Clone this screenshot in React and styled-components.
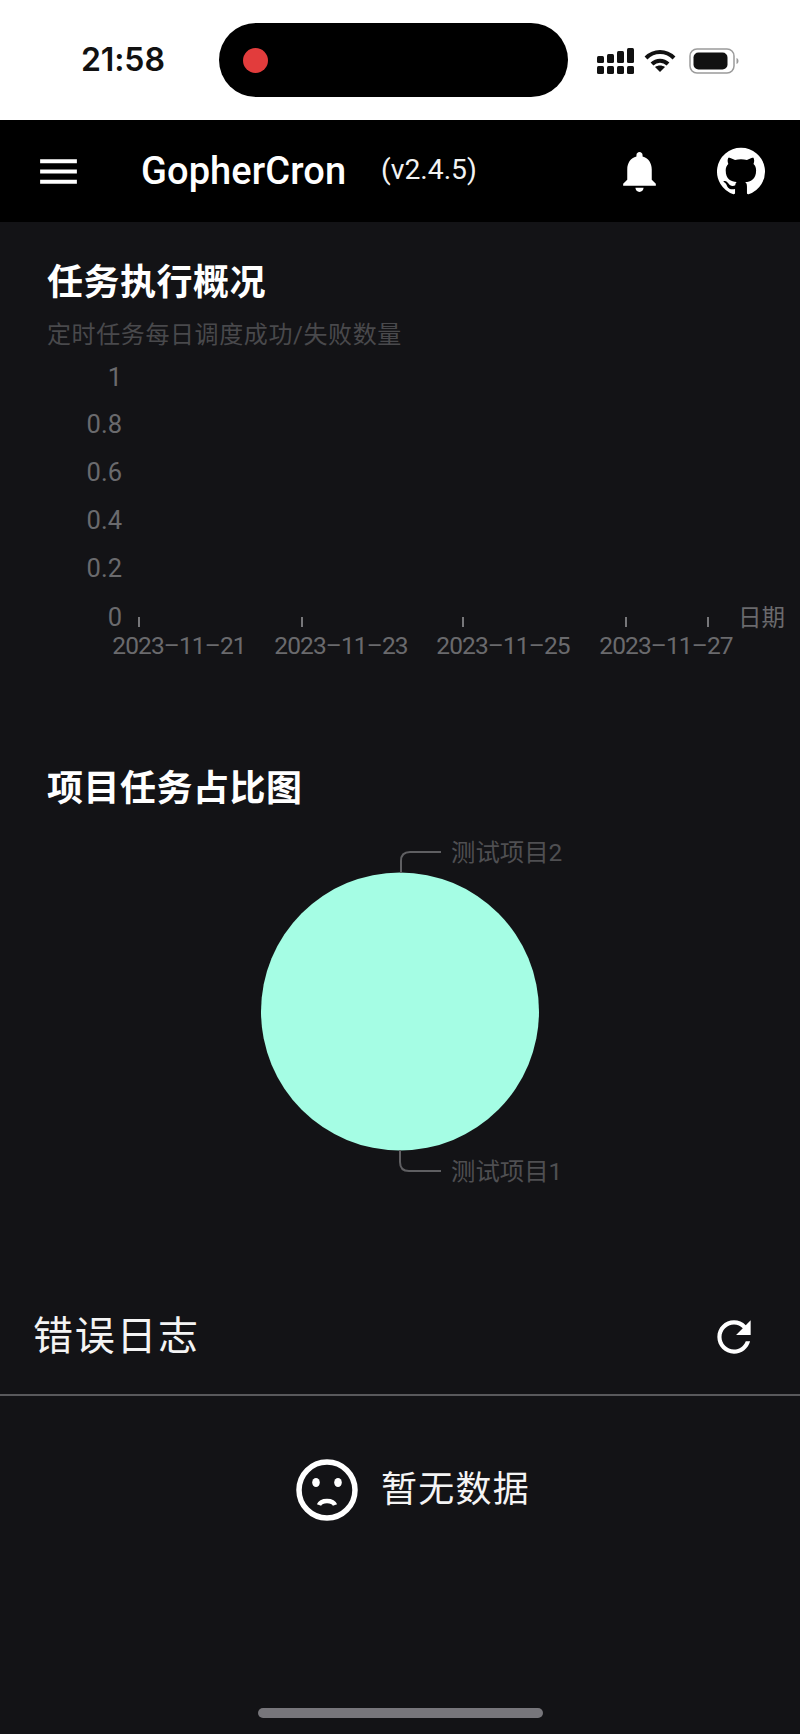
import React from "react";
import styled, { createGlobalStyle } from "styled-components";

const Global = createGlobalStyle`
  html, body { margin: 0; padding: 0; background: #131316; }
  * { box-sizing: border-box; }
`;
const CJK = `Roboto, "Noto Sans CJK SC", sans-serif`;

const Page = styled.div`
  width: 800px; height: 1734px; display: flex; flex-direction: column;
  background: #131316; color: #fff; font-family: ${CJK}; overflow: hidden;
`;
const StatusBar = styled.div`
  height: 120px; flex: none; background: #fff; color: #111; position: relative;
  display: flex; align-items: center; padding: 0 61px 0 81px;
`;
const Clock = styled.div`
  width: 138px; font: 600 32px/1 Inter, sans-serif; letter-spacing: -0.1px; margin-top: -1px;
`;
const Island = styled.div`
  width: 350px; height: 74px; border-radius: 37px; background: #000; display: flex; align-items: center; padding-left: 24px;
`;
const RecDot = styled.span`
  width: 25px; height: 25px; border-radius: 50%; background: #e23c3c;
`;
const StatusIcons = styled.div`
  display: flex; align-items: center; gap: 9px; margin-left: 29px; margin-top: 1px;
`;
const AppBar = styled.header`
  height: 102px; flex: none; background: #000; display: flex; align-items: center; padding: 0 32px 0 34px;
`;
const IconSlot = styled.span`
  display: inline-flex; flex: none; color: #fff;
  margin: ${p => p.$m || 0};
`;
const Brand = styled.div`
  font: 500 38px/1 Roboto, sans-serif; margin-left: 58px; width: 240px; letter-spacing: 0.1px;
`;
const Version = styled.div`
  font: 400 28.3px/1 Roboto, sans-serif; flex: 1; color: #f2f2f2; margin-top: -2px;
`;
const Main = styled.main`
  flex: 1; display: flex; flex-direction: column; min-height: 0;
`;
const Section = styled.section`
  padding: ${p => p.$pad};
`;
const SectionTitle = styled.h2`
  margin: 0; font: 700 36px/44px ${CJK}; color: #fff; letter-spacing: 0.5px;
`;
const SectionSub = styled.p`
  margin: 14px 0 0; font: 400 24px/32px ${CJK}; color: #49494c; letter-spacing: 0.6px;
`;
const Chart = styled.svg`
  display: block; flex: none; font-family: ${CJK};
`;
const LogHead = styled.div`
  height: 117px; margin-top: 78px; display: flex; align-items: center; justify-content: space-between;
  padding: 0 41px 0 33px; border-bottom: 2px solid #59595c;
`;
const LogTitle = styled.div`
  font: 400 40px/1 ${CJK}; letter-spacing: 1.7px; color: #f4f4f4;
`;
const Empty = styled.div`
  display: flex; align-items: center; justify-content: center; gap: 23px; padding: 63px 0 0 26px;
`;
const EmptyText = styled.div`
  font: 400 36px/1 ${CJK}; color: #f4f4f4; letter-spacing: 1.2px;
`;
const HomeWrap = styled.div`
  margin-top: auto; padding-bottom: 16px; display: flex; justify-content: center;
`;
const HomeBar = styled.div`
  width: 285px; height: 10px; border-radius: 5px; background: #77767b;
`;

const Mi = ({ d, size, color = "currentColor" }) => (
  <svg width={size} height={size} viewBox="0 0 24 24" fill={color}><path d={d} /></svg>
);
const ICONS = {
  menu: "M3 18h18v-2H3v2zm0-5h18v-2H3v2zm0-7v2h18V6H3z",
  bell: "M12 22c1.1 0 2-.9 2-2h-4c0 1.1.89 2 2 2zm6-6v-5c0-3.07-1.64-5.64-4.5-6.32V4c0-.83-.67-1.5-1.5-1.5s-1.5.67-1.5 1.5v.68C7.63 5.36 6 7.92 6 11v5l-2 2v1h16v-1l-2-2z",
  github: "M12 1.27a11 11 0 00-3.48 21.46c.55.09.73-.28.73-.55v-1.84c-3.03.64-3.67-1.46-3.67-1.46-.55-1.29-1.28-1.65-1.28-1.65-.92-.65.1-.65.1-.65 1.1 0 1.73 1.1 1.73 1.1.92 1.65 2.57 1.2 3.21.92a2 2 0 01.64-1.47c-2.47-.27-5.04-1.19-5.04-5.5 0-1.1.46-2.1 1.2-2.84a3.76 3.76 0 010-2.93s.91-.28 3.11 1.1c1.8-.49 3.7-.49 5.5 0 2.1-1.38 3.02-1.1 3.02-1.1a3.76 3.76 0 010 2.93c.83.74 1.2 1.74 1.2 2.94 0 4.21-2.57 5.13-5.04 5.4.45.37.82.92.82 2.02v3.03c0 .27.1.64.73.55A11 11 0 0012 1.27",
  refresh: "M17.65 6.35C16.2 4.9 14.21 4 12 4c-4.42 0-7.99 3.58-7.99 8s3.57 8 7.99 8c3.73 0 6.84-2.55 7.73-6h-2.08c-.82 2.33-3.04 4-5.65 4-3.31 0-6-2.69-6-6s2.69-6 6-6c1.66 0 3.14.69 4.22 1.78L13 11h7V4l-2.35 2.35z",
};

const Signal = () => (
  <svg width="38" height="26" viewBox="0 0 38 26" fill="#111">
    {[0, 10, 20, 30].map((x, i) => (
      <g key={x}>
        <rect x={x} y="18" width="7" height="8" rx="1.5" />
        <rect x={x} y={[8, 6, 3, 0][i]} width="7" height={[7, 9, 12, 15][i]} rx="1.5" />
      </g>
    ))}
  </svg>
);
const Wifi = () => (
  <svg width="32" height="24" viewBox="0 0 32 24" fill="none" stroke="#111" strokeWidth="4">
    <path d="M2 9c8-8 20-8 28 0" />
    <path d="M8 15c4.500-4.500 11.500-4.500 16 0" />
    <path d="M16 23l-5-5c3-2 7-2 10 0z" fill="#111" stroke="none" />
  </svg>
);
const Battery = () => (
  <svg width="50" height="26" viewBox="0 0 50 26">
    <rect x="1" y="1" width="44" height="24" rx="7" fill="none" stroke="#9b9b9b" strokeWidth="1.500" />
    <rect x="4.500" y="4.500" width="34" height="17" rx="5" fill="#111" />
    <path d="M47.500 10c1.500.5 2 2 2 3s-.5 2.500-2 3z" fill="#9b9b9b" />
  </svg>
);
const Sad = () => (
  <svg width="62" height="62" viewBox="0 0 62 62" fill="none">
    <circle cx="31" cy="31" r="28" stroke="#fff" strokeWidth="5.500" />
    <ellipse cx="20" cy="23.500" rx="3.800" ry="4.500" fill="#fff" />
    <ellipse cx="42" cy="23.500" rx="3.800" ry="4.500" fill="#fff" />
    <path d="M23 46c2-5.500 14-5.500 16 0" stroke="#fff" strokeWidth="4.500" />
  </svg>
);

const yLabels = [["1", 17], ["0.8", 64], ["0.6", 112], ["0.4", 160], ["0.2", 208], ["0", 257]];
const ticks = [139, 302, 463, 626, 708];
const xLabels = [[179, "2023–11–21"], [341, "2023–11–23"], [503, "2023–11–25"], [666, "2023–11–27"]];

const LineChart = () => (
  <Chart width="800" height="320" viewBox="0 0 800 320">
    <g fill="#6a6a6d" fontSize="25.500" textAnchor="end">
      {yLabels.map(([t, y]) => <text key={t} x="122" y={y + 9}>{t}</text>)}
    </g>
    <g stroke="#77777a" strokeWidth="2">
      {ticks.map(x => <line key={x} x1={x} x2={x} y1="257" y2="267" />)}
    </g>
    <g fill="#6a6a6d" fontSize="24.500" letterSpacing="-0.9" textAnchor="middle">
      {xLabels.map(([x, t]) => <text key={t} x={x} y="294">{t}</text>)}
    </g>
    <text x="738" y="266" fill="#6a6a6d" fontSize="23.500">日期</text>
  </Chart>
);

const PieChart = () => (
  <Chart width="800" height="380" viewBox="0 0 800 380">
    <circle cx="400" cy="190.500" r="139" fill="#a5fde4" />
    <g fill="none" stroke="#5f5f62" strokeWidth="2">
      <path d="M401 52V40q0-9 9-9h31" />
      <path d="M400 329v12q0 9 9 9h32" />
    </g>
    <g fill="#4f4f52" fontSize="24.400">
      <text x="451" y="40">测试项目2</text>
      <text x="451" y="359">测试项目1</text>
    </g>
  </Chart>
);

export default function App() {
  return (
    <Page>
      <Global />
      <StatusBar>
        <Clock>21:58</Clock>
        <Island><RecDot /></Island>
        <StatusIcons>
          <Signal />
          <Wifi />
          <IconSlot $m="0 0 0 4px"><Battery /></IconSlot>
        </StatusIcons>
      </StatusBar>
      <AppBar>
        <IconSlot><Mi d={ICONS.menu} size={49} /></IconSlot>
        <Brand>GopherCron</Brand>
        <Version>(v2.4.5)</Version>
        <IconSlot $m="0 51px 0 0"><Mi d={ICONS.bell} size={49} /></IconSlot>
        <IconSlot $m="0 1px 0 0"><Mi d={ICONS.github} size={52} /></IconSlot>
      </AppBar>
      <Main>
        <Section $pad="39px 47px 9px">
          <SectionTitle>任务执行概况</SectionTitle>
          <SectionSub>定时任务每日调度成功/失败数量</SectionSub>
        </Section>
        <LineChart />
        <Section $pad="87px 47px 10px">
          <SectionTitle>项目任务占比图</SectionTitle>
        </Section>
        <PieChart />
        <LogHead>
          <LogTitle>错误日志</LogTitle>
          <IconSlot><Mi d={ICONS.refresh} size={50} /></IconSlot>
        </LogHead>
        <Empty>
          <Sad />
          <EmptyText>暂无数据</EmptyText>
        </Empty>
        <HomeWrap><HomeBar /></HomeWrap>
      </Main>
    </Page>
  );
}
